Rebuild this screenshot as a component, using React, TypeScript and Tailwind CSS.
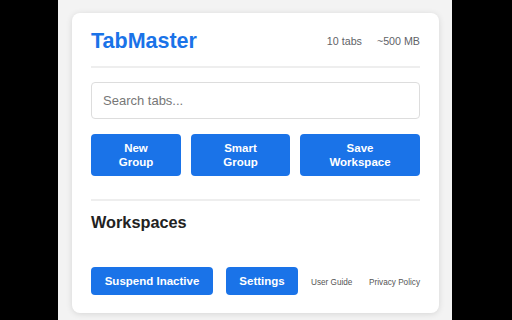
const font = { fontFamily: '"Liberation Sans", Arial, sans-serif' };

const PrimaryButton = (props: { label: string; className?: string }) => (
    <button
        className={`shrink-0 rounded-[4px] bg-[#1a73e8] text-[11.5px] font-bold leading-[14px] text-white ${props.className ?? ""}`}
    >
        {props.label}
    </button>
);

export default function App() {
    return (
        <div className="flex h-[320px] w-full bg-black pl-[58px]" style={font}>
            <div className="h-full w-[394px] bg-[#f3f3f3] pl-[14px] pr-[13px] pt-[13px]">
                <div className="rounded-[8px] bg-white px-[19px] pb-[18px] pt-[16px] shadow-[0_1px_6px_rgba(0,0,0,0.12)]">
                    <div className="flex items-center justify-between border-b-2 border-[#eeeeee] pb-[12px]">
                        <h1 className="text-[21.5px] font-bold leading-[25px] text-[#1a73e8]">
                            TabMaster
                        </h1>
                        <div className="flex gap-[15px] text-[10.7px] text-[#5f6368]">
                            <span>10 tabs</span>
                            <span>~500 MB</span>
                        </div>
                    </div>

                    <input
                        type="text"
                        placeholder="Search tabs..."
                        className="mt-[14px] block h-[37px] w-full rounded-[4px] border border-[#dddddd] px-[11px] text-[13px] text-[#333] placeholder:text-[#777]"
                    />

                    <div className="mt-[15px] flex gap-[10px]">
                        <PrimaryButton label="New Group" className="h-[42px] w-[90px] px-[18px]" />
                        <PrimaryButton label="Smart Group" className="h-[42px] w-[99px] px-[18px]" />
                        <PrimaryButton label="Save Workspace" className="h-[42px] flex-1 px-[18px]" />
                    </div>

                    <div className="mt-[23px] border-t-2 border-[#eeeeee] pt-[12px]">
                        <h2 className="text-[16.3px] font-bold leading-[19px] text-[#222]">
                            Workspaces
                        </h2>
                    </div>

                    <div className="mt-[35px] flex items-baseline whitespace-nowrap">
                        <PrimaryButton label="Suspend Inactive" className="h-[28px] w-[122px]" />
                        <PrimaryButton label="Settings" className="ml-[13px] h-[28px] w-[72px]" />
                        <a className="ml-[13px] text-[8.2px] text-[#555]">User Guide</a>
                        <a className="ml-auto text-[8.2px] text-[#555]">Privacy Policy</a>
                    </div>
                </div>
            </div>
        </div>
    );
}
